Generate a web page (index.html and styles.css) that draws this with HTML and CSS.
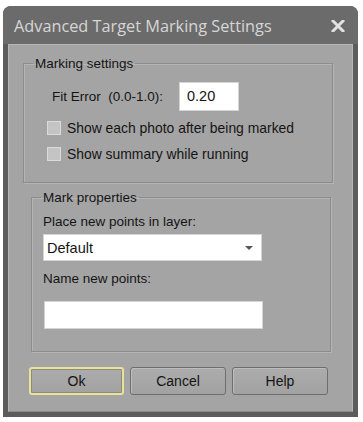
FILE: index.html
```html
<!DOCTYPE html>
<html lang="en">
<head>
<meta charset="UTF-8">
<title>Advanced Target Marking Settings</title>
<link rel="stylesheet" href="styles.css">
</head>
<body>
<div class="dialog">
<div class="titlebar">
<span class="title">Advanced Target Marking Settings</span>
<svg class="close" width="14" height="12" viewBox="0 0 14 12"><path d="M2 1 L12 11 M12 1 L2 11" stroke="#e2e2e2" stroke-width="3" stroke-linecap="square"/></svg>
</div>
<div class="panel">
<fieldset class="group marking">
<legend>Marking settings</legend>
<div class="fit-row">
<span class="fit-label">Fit Error&nbsp; (0.0-1.0):</span>
<div class="field fit">0.20</div>
</div>
<div class="check first"><span class="box"></span>Show each photo after being marked</div>
<div class="check"><span class="box"></span>Show summary while running</div>
</fieldset>
<fieldset class="group props">
<legend>Mark properties</legend>
<div class="label layer-label">Place new points in layer:</div>
<div class="field select"><span>Default</span><span class="arrow"></span></div>
<div class="label name-label">Name new points:</div>
<div class="field name"></div>
</fieldset>
<div class="buttons">
<button class="btn default">Ok</button>
<button class="btn">Cancel</button>
<button class="btn">Help</button>
</div>
</div>
</div>
</body>
</html>
```

FILE: styles.css
```css
body {
margin: 0;
background-color: #ffffff;
font-family: "Liberation Sans", Arial, sans-serif;
font-size: 13.5px;
color: #141414;
}
.dialog {
width: 355px;
height: 411px;
margin: 6px 0 0 3px;
background-color: #5c5c5c;
border-radius: 8px 8px 0 0;
padding: 0 5px 5px;
box-sizing: border-box;
display: flex;
flex-direction: column;
}
.titlebar {
height: 38px;
flex: none;
display: flex;
align-items: center;
justify-content: space-between;
background-color: #6b6b6b;
margin: 0 -5px;
padding: 0 13px 0 11px;
border-radius: 8px 8px 0 0;
}
.title {
font-family: "Open Sans", sans-serif;
font-size: 16.3px;
color: #d6d6d6;
margin-top: 1px;
}
.close {
margin-top: 1px;
}
.panel {
flex: 1;
background-color: #a4a4a4;
border: 1px solid #b6b6b6;
border-bottom-color: #8a8a8a;
display: flex;
flex-direction: column;
}
.group {
margin: 0;
border: 1px solid #8c8c8c;
box-shadow: inset 1px 1px 0 #b4b4b4, 1px 1px 0 #b4b4b4;
padding: 0;
box-sizing: border-box;
}
.group legend {
padding: 0 2px;
margin-left: 9px;
}
.marking {
width: 310px;
height: 127px;
margin: 11px 0 0 14px;
padding-top: 11px;
}
.props {
width: 300px;
height: 162px;
margin: 7px 0 0 22px;
padding: 9px 0 0 11px;
}
.props legend {
margin-left: -2px;
}
.fit-row {
display: flex;
align-items: center;
gap: 16px;
margin-left: 28px;
}
.field {
background-color: #ffffff;
border: 1px solid #d4d4d4;
box-sizing: border-box;
}
.fit {
width: 60px;
height: 29px;
padding: 5px 0 0 7px;
font-size: 14.5px;
}
.check {
display: flex;
align-items: center;
gap: 6px;
margin-left: 23px;
height: 26px;
font-size: 13.9px;
}
.check.first {
margin-top: 4px;
}
.box {
width: 12px;
height: 12px;
background-color: #c4c4c4;
border: 1px solid #dadada;
}
.label {
height: 18px;
}
.select {
width: 219px;
height: 27px;
margin-top: 2px;
display: flex;
align-items: center;
justify-content: space-between;
padding: 0 8px 0 3px;
font-size: 14.5px;
}
.arrow {
width: 0;
height: 0;
border-left: 4px solid transparent;
border-right: 4px solid transparent;
border-top: 4px solid #555555;
}
.name-label {
margin-top: 10px;
}
.name {
width: 219px;
height: 28px;
margin-top: 12px;
margin-left: 1px;
}
.buttons {
display: flex;
gap: 6px;
margin: 15px 0 0 20px;
}
.btn {
font-family: "Liberation Sans", Arial, sans-serif;
font-size: 14px;
color: #141414;
width: 96px;
height: 28px;
background: linear-gradient(#acacac, #a2a2a2);
border: 1px solid #6e6e6e;
border-radius: 3px;
box-shadow: inset 1px 1px 0 #bdbdbd;
padding: 0;
}
.btn.default {
width: 95px;
border: 2px solid #e9e29a;
box-shadow: inset 0 0 0 1px #8c8c7a;
}
```
